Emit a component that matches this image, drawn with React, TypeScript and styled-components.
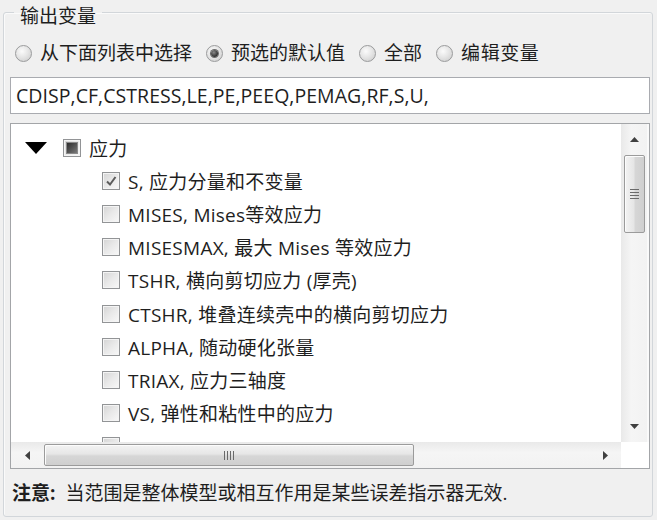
import React from "react";
import styled, { createGlobalStyle, css } from "styled-components";

const Global = createGlobalStyle`
  html, body { margin: 0; padding: 0; background: #f0f0f0; }
  body {
    font-family: "Open Sans", "Noto Sans CJK SC", sans-serif;
    color: #1e1e1e;
    font-size: 19px;
  }
  #root { padding: 0 0 0 3px; }
`;

const Group = styled.fieldset`
  box-sizing: border-box;
  width: 650px;
  height: 517px;
  margin: 0;
  padding: 17px 2px 10px 6px;
  border: 1px solid #d2d6da;
  border-radius: 3px;
  box-shadow: inset 1px 1px 0 #fafafa;
  display: flex;
  flex-direction: column;
`;

const Legend = styled.legend`
  margin-left: 4px;
  padding: 8px 6px 0;
  line-height: 16px;
  font-size: 19px;
`;

const RadioRow = styled.div`
  display: flex;
  align-items: center;
  height: 24px;
  padding-left: 5px;
`;

const RadioItem = styled.label`
  display: flex;
  align-items: center;
  gap: 8px;
  margin-right: 14px;
  white-space: nowrap;
  line-height: 24px;
`;

const RadioText = styled.span<{ $wide?: boolean }>`
  letter-spacing: ${(p) => (p.$wide ? "0.6px" : "0")};
`;

const RadioCircle = styled.span<{ $on?: boolean }>`
  box-sizing: border-box;
  width: 17px;
  height: 17px;
  border-radius: 50%;
  border: 1px solid #9a9b9c;
  background: radial-gradient(circle at 40% 35%, #fbfbfb 0%, #e6e6e6 45%, #c9c9c9 100%);
  display: flex;
  align-items: center;
  justify-content: center;
  ${(p) =>
    p.$on &&
    css`
      &::after {
        content: "";
        width: 7px;
        height: 7px;
        border-radius: 50%;
        background: radial-gradient(circle at 40% 35%, #8a8a8a 0%, #2e2e2e 70%);
        box-shadow: 0 0 0 1px #6c6c6c;
      }
    `}
`;

const TextField = styled.div`
  box-sizing: border-box;
  margin-top: 12px;
  height: 37px;
  background: #fff;
  border: 1px solid #a9abb0;
  padding: 0 5px;
  display: flex;
  align-items: center;
  white-space: nowrap;
  font-size: 19.5px;
  letter-spacing: 0.05px;
`;

const ListBox = styled.div`
  box-sizing: border-box;
  margin-top: 9px;
  height: 346px;
  border: 1px solid #a3a5a8;
  background: #fff;
  display: grid;
  grid-template-columns: 1fr 28px;
  grid-template-rows: 1fr 26px;
  overflow: hidden;
`;

const TreeView = styled.div`
  overflow: hidden;
  padding-top: 7px;
`;

const Row = styled.div<{ $indent: number }>`
  display: flex;
  align-items: center;
  height: 33.2px;
  padding-left: ${(p) => p.$indent}px;
  white-space: nowrap;
`;

const Expander = styled.svg`
  width: 22px;
  height: 12px;
  margin-right: 16px;
  flex: none;
`;

const Check = styled.span<{ $state?: "on" | "mixed" | "off" }>`
  box-sizing: border-box;
  flex: none;
  width: 18px;
  height: 18px;
  margin-right: 8px;
  border: 1px solid #929496;
  background: linear-gradient(135deg, #d4d4d4 0%, #e9e9e9 50%, #f8f8f8 100%);
  box-shadow: inset 0 0 0 1px #f4f4f4;
  display: flex;
  align-items: center;
  justify-content: center;
  ${(p) =>
    p.$state === "mixed" &&
    css`
      &::after {
        content: "";
        width: 10px;
        height: 10px;
        background: linear-gradient(135deg, #2c2c2c 0%, #5a5a5a 60%, #7a7a7a 100%);
        box-shadow: 0 0 0 1px #8a8a8a;
      }
    `}
`;

const Label = styled.span`
  letter-spacing: 0.25px;
`;

const VScroll = styled.div`
  display: flex;
  flex-direction: column;
  align-items: center;
  background: linear-gradient(90deg, #e9e9e9, #f5f5f5 40%, #f2f2f2);
  border-right: 2px solid #fafafa;
`;

const HScroll = styled.div`
  display: flex;
  align-items: center;
  background: linear-gradient(180deg, #e9e9e9, #f5f5f5 40%, #f2f2f2);
`;

const Corner = styled.div`
  background: #fff;
`;

const ArrowBtn = styled.div<{ $v?: boolean }>`
  flex: none;
  display: flex;
  align-items: center;
  justify-content: center;
  ${(p) => (p.$v ? "height: 31px; width: 100%;" : "width: 32px; height: 100%;")}
`;

const Thumb = styled.div<{ $v?: boolean }>`
  box-sizing: border-box;
  border: 1px solid #9b9b9b;
  border-radius: 2px;
  display: flex;
  align-items: center;
  justify-content: center;
  ${(p) =>
    p.$v
      ? css`
          width: 21px;
          height: 78px;
          background: linear-gradient(90deg, #f3f3f3 0%, #e6e6e6 45%, #d6d6d6 55%, #cfcfcf 100%);
          box-shadow: inset 1px 1px 0 #fcfcfc;
        `
      : css`
          width: 370px;
          height: 22px;
          margin-left: 1px;
          background: linear-gradient(180deg, #f3f3f3 0%, #e6e6e6 45%, #d6d6d6 55%, #cfcfcf 100%);
          box-shadow: inset 1px 1px 0 #fcfcfc;
        `}
`;

const Spacer = styled.div`
  flex: 1;
`;

const Note = styled.div`
  margin-top: 12px;
  line-height: 24px;
  padding-left: 2px;
  white-space: nowrap;
`;

const Strong = styled.b`
  font-weight: 700;
  margin-right: 10px;
`;

const Tri = ({ d }: { d: "up" | "down" | "left" | "right" }) => {
  const pts = {
    up: "0,5 4.5,0 9,5",
    down: "0,0 9,0 4.5,5",
    left: "5,0 5,9 0,4.5",
    right: "0,0 0,9 5,4.5",
  }[d];
  const vert = d === "up" || d === "down";
  return (
    <svg width={vert ? 9 : 5} height={vert ? 5 : 9} viewBox={vert ? "0 0 9 5" : "0 0 5 9"}>
      <polygon points={pts} fill="#404040" />
    </svg>
  );
};

const children = [
  { t: "S, 应力分量和不变量", on: true },
  { t: "MISES, Mises等效应力" },
  { t: "MISESMAX, 最大 Mises 等效应力" },
  { t: "TSHR, 横向剪切应力 (厚壳)" },
  { t: "CTSHR, 堆叠连续壳中的横向剪切应力" },
  { t: "ALPHA, 随动硬化张量" },
  { t: "TRIAX, 应力三轴度" },
  { t: "VS, 弹性和粘性中的应力" },
  { t: "" },
];

export default function App() {
  return (
    <>
      <Global />
      <Group>
        <Legend>输出变量</Legend>
        <RadioRow>
          <RadioItem><RadioCircle /><RadioText>从下面列表中选择</RadioText></RadioItem>
          <RadioItem><RadioCircle $on /><RadioText>预选的默认值</RadioText></RadioItem>
          <RadioItem><RadioCircle /><RadioText>全部</RadioText></RadioItem>
          <RadioItem><RadioCircle /><RadioText $wide>编辑变量</RadioText></RadioItem>
        </RadioRow>
        <TextField>CDISP,CF,CSTRESS,LE,PE,PEEQ,PEMAG,RF,S,U,</TextField>
        <ListBox>
          <TreeView>
            <Row $indent={14}>
              <Expander viewBox="0 0 22 12">
                <polygon points="0,0 22,0 11,12" fill="#000" />
              </Expander>
              <Check $state="mixed" />
              <Label>应力</Label>
            </Row>
            {children.map((c, i) => (
              <Row key={i} $indent={91}>
                <Check $state={c.on ? "on" : "off"}>
                  {c.on && (
                    <svg width="12" height="12" viewBox="0 0 12 12">
                      <path d="M2 6.5 L5 9.5 L10.5 2" stroke="#5c5c5c" strokeWidth="2" fill="none" />
                    </svg>
                  )}
                </Check>
                {c.t && <Label>{c.t}</Label>}
              </Row>
            ))}
          </TreeView>
          <VScroll>
            <ArrowBtn $v><Tri d="up" /></ArrowBtn>
            <Thumb $v>
              <svg width="9" height="12" viewBox="0 0 9 12">
                <path d="M0 1.5h9M0 4.5h9M0 7.5h9M0 10.5h9" stroke="#6a6a6a" strokeWidth="1" />
              </svg>
            </Thumb>
            <Spacer />
            <ArrowBtn $v><Tri d="down" /></ArrowBtn>
          </VScroll>
          <HScroll>
            <ArrowBtn><Tri d="left" /></ArrowBtn>
            <Thumb>
              <svg width="12" height="9" viewBox="0 0 12 9">
                <path d="M1.5 0v9M4.5 0v9M7.5 0v9M10.5 0v9" stroke="#6a6a6a" strokeWidth="1" />
              </svg>
            </Thumb>
            <Spacer />
            <ArrowBtn><Tri d="right" /></ArrowBtn>
          </HScroll>
          <Corner />
        </ListBox>
        <Note>
          <Strong>注意:</Strong>当范围是整体模型或相互作用是某些误差指示器无效.
        </Note>
      </Group>
    </>
  );
}
